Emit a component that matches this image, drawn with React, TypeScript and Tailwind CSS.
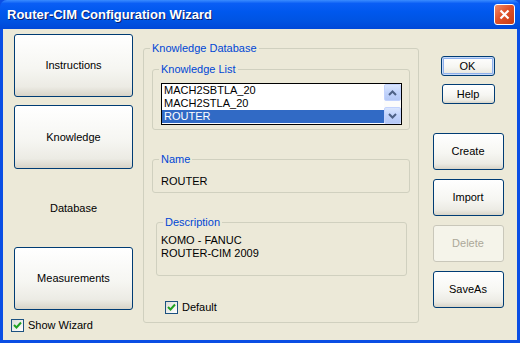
import React from "react";

const btn =
  "flex items-center justify-center rounded-[3px] border border-[#003C74] bg-[linear-gradient(180deg,#FFFFFF_0%,#F6F6F2_55%,#ECEBE4_85%,#D8D4C8_100%)] text-black text-[11px] leading-none";

function Check() {
  return (
    <div className="w-[13px] h-[13px] border border-[#1C5180] bg-[linear-gradient(135deg,#DCDCD7_0%,#FFFFFF_100%)] flex items-center justify-center">
      <svg width="9" height="9" viewBox="0 0 9 9">
        <path d="M1 4 L3.5 6.5 L8 1.5" fill="none" stroke="#21A121" strokeWidth="2" />
      </svg>
    </div>
  );
}

function ScrollBtn({ up }: { up?: boolean }) {
  return (
    <div className="h-[17px] w-[17px] rounded-[2px] border border-[#C3D3FD] bg-[linear-gradient(180deg,#DAE6FE_0%,#C1D3FB_50%,#B4C8F6_100%)] flex items-center justify-center">
      <svg width="9" height="6" viewBox="0 0 9 6">
        {up ? (
          <path d="M1 5 L4.5 1.5 L8 5" fill="none" stroke="#4D6185" strokeWidth="2" />
        ) : (
          <path d="M1 1 L4.5 4.5 L8 1" fill="none" stroke="#4D6185" strokeWidth="2" />
        )}
      </svg>
    </div>
  );
}

export default function App() {
  const font = { fontFamily: '"Liberation Sans", Arial, sans-serif' };
  return (
    <div className="w-[520px] h-[343px] flex flex-col overflow-hidden bg-[#0A4EE4]" style={font}>
      {/* Title bar */}
      <div className="h-[29px] shrink-0 rounded-t-[7px] bg-[linear-gradient(180deg,#3A8CFF_0%,#0A5EF5_12%,#0058EE_40%,#0054E3_70%,#0048D8_100%)] flex items-center pl-[7px] pr-[5px]">
        <div className="flex-1 text-white font-bold text-[13px] leading-none [text-shadow:1px_1px_0_#0A1F6E]">
          Router-CIM Configuration Wizard
        </div>
        <div className="w-[21px] h-[21px] rounded-[3px] border border-white bg-[linear-gradient(135deg,#F08C6A_0%,#E0522A_45%,#C83C14_100%)] flex items-center justify-center">
          <svg width="11" height="11" viewBox="0 0 11 11">
            <path d="M1.5 1.5 L9.5 9.5 M9.5 1.5 L1.5 9.5" stroke="white" strokeWidth="2.2" />
          </svg>
        </div>
      </div>
      {/* Body */}
      <div className="flex-1 mx-[3px] mb-[3px] bg-[#ECE9D8] flex text-[11px] text-black">
        {/* Left column */}
        <div className="w-[140px] flex flex-col pt-[5px] pl-[8px]">
          <div className={btn + " ml-[3px] w-[119px] h-[63px]"}>Instructions</div>
          <div className={btn + " ml-[3px] mt-[8px] w-[119px] h-[64px]"}>Knowledge</div>
          <div className="ml-[3px] w-[119px] h-[78px] flex items-center justify-center">Database</div>
          <div className={btn + " ml-[3px] w-[119px] h-[63px]"}>Measurements</div>
          <div className="mt-[9px] flex items-center gap-[4px]">
            <Check />
            <span className="leading-none">Show Wizard</span>
          </div>
        </div>
        {/* Middle group */}
        <fieldset className="mt-[12px] w-[276px] h-[282px] border border-[#D0D0BF] rounded-[3px] flex flex-col">
          <legend className="ml-[6px] px-[2px] text-[#0046D5] leading-[14px]">Knowledge Database</legend>
          <fieldset className="mt-[7px] ml-[8px] w-[258px] h-[68px] border border-[#D0D0BF] rounded-[3px]">
            <legend className="ml-[6px] px-[2px] text-[#0046D5] leading-[14px]">Knowledge List</legend>
            <div className="mt-[7px] ml-[8px] w-[241px] h-[42px] border border-black bg-white flex">
              <div className="flex-1 flex flex-col pt-0 text-[11px] leading-[13px]">
                <div className="pl-[2px] h-[13px]">MACH2SBTLA_20</div>
                <div className="pl-[2px] h-[13px]">MACH2STLA_20</div>
                <div className="pl-[2px] h-[13px] bg-[#316AC5] text-white">ROUTER</div>
              </div>
              <div className="w-[17px] flex flex-col justify-between bg-[#FCFCFB]">
                <ScrollBtn up />
                <ScrollBtn />
              </div>
            </div>
          </fieldset>
          <fieldset className="mt-[22px] ml-[8px] w-[258px] h-[41px] border border-[#D0D0BF] rounded-[3px]">
            <legend className="ml-[6px] px-[2px] text-[#0046D5] leading-[14px]">Name</legend>
            <div className="mt-[9px] pl-[8px] leading-[13px] text-[11px]">ROUTER</div>
          </fieldset>
          <fieldset className="mt-[22px] ml-[12px] w-[251px] h-[61px] border border-[#D0D0BF] rounded-[3px]">
            <legend className="ml-[6px] px-[2px] text-[#0046D5] leading-[14px]">Description</legend>
            <div className="mt-[5px] pl-[4px] leading-[13px] text-[11px]">
              <div>KOMO - FANUC</div>
              <div>ROUTER-CIM 2009</div>
            </div>
          </fieldset>
          <div className="mt-[25px] ml-[21px] flex items-center gap-[4px]">
            <Check />
            <span className="leading-none">Default</span>
          </div>
        </fieldset>
        {/* Right column */}
        <div className="flex-1 flex flex-col items-center pt-[27px]">
          <div className={btn + " w-[54px] h-[20px] shadow-[inset_0_0_0_1px_#C8DAF8,inset_0_0_0_2px_#8EB0EC] ml-[-1px]"}>OK</div>
          <div className={btn + " mt-[8px] w-[53px] h-[20px]"}>Help</div>
          <div className={btn + " mt-[29px] w-[71px] h-[37px]"}>Create</div>
          <div className={btn + " mt-[9px] w-[71px] h-[37px]"}>Import</div>
          <div className="mt-[9px] w-[71px] h-[37px] rounded-[3px] border border-[#C9C7BA] bg-[#F5F4EA] text-[#ACA899] flex items-center justify-center leading-none">
            Delete
          </div>
          <div className={btn + " mt-[9px] w-[71px] h-[37px]"}>SaveAs</div>
        </div>
      </div>
    </div>
  );
}
